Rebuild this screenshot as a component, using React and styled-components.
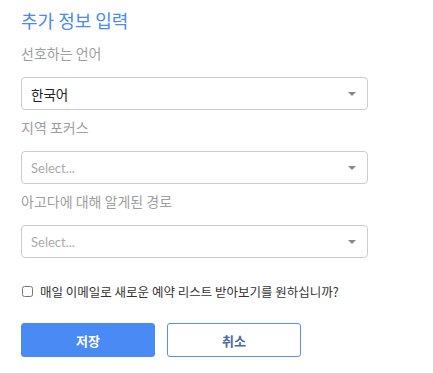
import React from 'react';
import styled, { createGlobalStyle } from 'styled-components';

const GlobalStyle = createGlobalStyle`
  body {
    margin: 0;
    background: #fff;
    font-family: Lato, "Noto Sans CJK KR", sans-serif;
  }
`;

const fields = [
  { label: '선호하는 언어', value: '한국어' },
  { label: '지역 포커스' },
  { label: '아고다에 대해 알게된 경로' },
];

export default function App() {
  return (
    <>
      <GlobalStyle />
      <Form>
        <Title>추가 정보 입력</Title>
        {fields.map(f => (
          <Field key={f.label}>
            <Label>{f.label}</Label>
            <SelectBox>
              {f.value ? <Value>{f.value}</Value> : <Placeholder>Select...</Placeholder>}
              <Caret />
            </SelectBox>
          </Field>
        ))}
        <CheckRow>
          <Box type="checkbox" />
          <span>매일 이메일로 새로운 예약 리스트 받아보기를 원하십니까?</span>
        </CheckRow>
        <Buttons>
          <Button $primary>저장</Button>
          <Button>취소</Button>
        </Buttons>
      </Form>
    </>
  );
}

const Form = styled.div`
  padding: 8px 65px 0 21px;
  display: flex;
  flex-direction: column;
`;

const Title = styled.h2`
  margin: 0;
  font-family: "Noto Sans CJK KR", sans-serif;
  font-size: 18px;
  font-weight: 400;
  color: #4a8af4;
  line-height: 24px;
`;

const Field = styled.div`
  display: flex;
  flex-direction: column;
  margin-top: 7px;
  &:first-of-type {
    margin-top: 11px;
  }
`;

const Label = styled.div`
  font-family: "Noto Sans CJK KR", sans-serif;
  font-size: 14px;
  color: #9e9e9e;
  line-height: 20px;
  margin-bottom: 14px;
`;

const SelectBox = styled.div`
  height: 33px;
  box-sizing: border-box;
  border: 1px solid #cccccc;
  border-radius: 4px;
  display: flex;
  align-items: center;
  justify-content: space-between;
  padding: 0 11px 0 9px;
`;

const Value = styled.span`
  font-family: "Noto Sans CJK KR", sans-serif;
  font-size: 13.5px;
  color: #222222;
`;

const Placeholder = styled.span`
  font-family: Lato, sans-serif;
  font-size: 13px;
  color: #aaaaaa;
`;

const Caret = styled.span`
  width: 0;
  height: 0;
  border-left: 4px solid transparent;
  border-right: 4px solid transparent;
  border-top: 4px solid #888888;
`;

const CheckRow = styled.label`
  display: flex;
  align-items: center;
  gap: 7px;
  height: 20px;
  margin-top: 23px;
  font-family: "Noto Sans CJK KR", sans-serif;
  font-size: 12.5px;
  color: #333;
`;

const Box = styled.input`
  margin: 0 0 0 1px;
  width: 11px;
  height: 11px;
`;

const Buttons = styled.div`
  display: flex;
  gap: 12px;
  margin-top: 22px;
`;

const Button = styled.button`
  width: 134px;
  height: 34px;
  box-sizing: border-box;
  border-radius: 3px;
  border: 1px solid ${p => (p.$primary ? '#4a8af4' : '#5b8ee6')};
  background: ${p => (p.$primary ? '#4a8af4' : '#ffffff')};
  color: ${p => (p.$primary ? '#ffffff' : '#4a6a9a')};
  font-family: "Noto Sans CJK KR", sans-serif;
  font-size: 13px;
  font-weight: 700;
  cursor: pointer;
`;
